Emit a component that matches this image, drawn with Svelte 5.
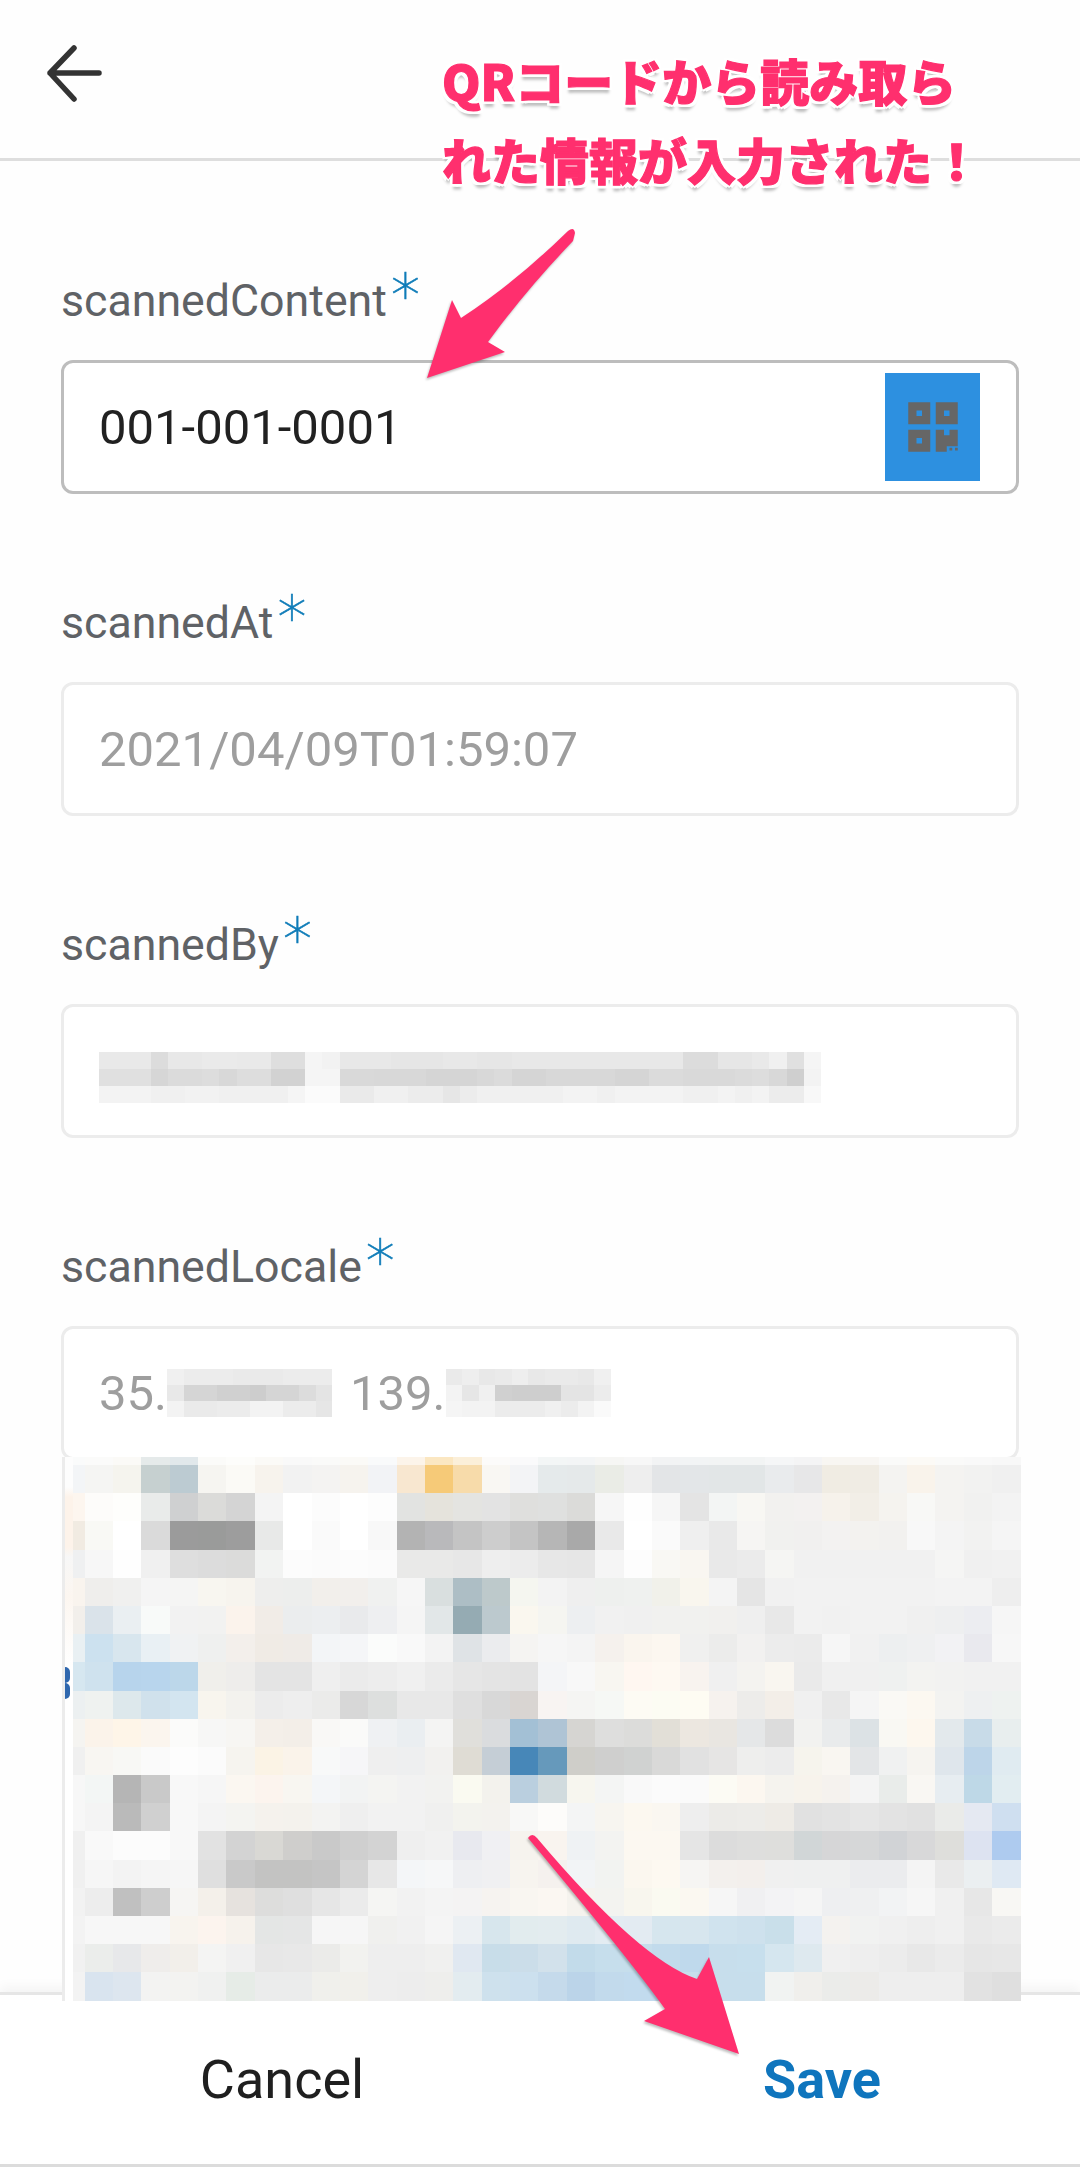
<script>
  // pixelated map screenshot, one string per row of cells
  const mapRows = [
    'f3f5f7 f5f5f3 f5f4ee c6d0d0 bccbd2 f6f5f1 fbfaf6 f7f3ed f2f2f2 f4f3f2 f6f3ee f2f3f6 f8e7d0 f6ca78 f7dbaa f9f7f3 f3f4f6 e5eaeb e5e9ea eaece6 eeeeee e3e5e7 e3e6e8 e2e6e7 e2e6e7 e9ebed e7e7e8 f0ece3 f0ece4 f4f3f1 f9f3eb f4f3f1 f2f2f1 f0f0f0',
    'fdf6ef fdfcfa fefefc e9ebea cfd0d1 dbdbd9 d4d4d4 f4f4f4 ffffff fcfcfc ffffff fdfdfd e2e3e1 e5e3dc e4e4e1 e3e3e3 dfdfdd dfe0df dbdbd9 f6f6f6 fefefe f6f6f6 e4e4e4 f3f5f4 f8f7f3 f2f1ef f3f1f0 f6f2eb f2eee7 f5f3ef f8f8f6 f4f3f1 f1f1f0 f3f3f3',
    'f1ebe2 f9f9f5 ffffff dadada 9b9b9b 9a9b9a 9d9d9d e8e9e8 ffffff fafafa ffffff f8f8f8 b3b3b3 b9b9bb c4c4c4 cdcdcd c4c4c4 b6b6b6 a9a9a9 e9e9e9 ffffff fafafa efefef e9e9e9 f6f5f3 f1f1ef f1f0ef f3f2f1 f3f2ef f2f1ef f8f8f8 f4f4f4 f2f2f1 f5f5f5',
    'eff0f1 f7f7f7 fefefe f0f0f0 dedede dcdcdc dbdbda f2f3f2 fcfcfc fbfbfb fcfcfc fbfbfb e9e9e8 e9e9e8 e7e7e7 eeeeee ececec e7e7e7 e6e6e6 f5f5f5 fdfdfd f9f8f4 f9f6f1 e9e9e9 ebebeb f5f5f3 f1f1f1 f1f1f1 f1f1f1 f1f1f1 f1f1f1 f5f5f4 f0f0f0 f1f1f1',
    'f9f4ee efeeec f0f0ef f5f5f5 f5f5f4 f8f6f0 f7f4ee eeeeed edeeed f2efeb f2efec f0f1f0 f6f6f6 d9dfdf adbec5 bdc9cb f5f6f0 f3f3f3 efefef eef0ee eff1ef f1f1ea f9f6ee f4f4f4 e5e5e5 f1f1f1 f2f2f2 f2f2f2 f2f2f2 f2f2f2 f2f2f2 f3f3f3 f3f3f3 eeeeee',
    'f2efeb dae3ea eaeff2 f8faf9 f2f2f2 f2f2f1 fbf3ec f1ece7 ebedee eceef0 e9eaec eeeff1 f5f5f5 e2e7e8 95abb3 bcc9ce faf7ef f5f5f1 edeff1 f1f1f1 f0f0f0 f1f1ef f1f1ef f1f0ee efefef e8e8e8 f2f2f2 f1f1f1 f2f2f2 f2f2f2 f0f0f0 eeeff0 ecedf1 f6f6f6',
    'e9f0f3 cce1ef d8e6ee e9f0f4 f0f2f3 eff0ef f3efeb f0ebe5 efebe7 f3f5f7 f5f6f8 fbfcfb f9f9f9 f3f3f3 dfe3e6 ebecee f5f4f2 f6f6f6 f4f4f4 f5f1ed faf5ee fcf7f0 f0f0ef ececeb f2f1f0 ececec ebebeb f6f6f6 f1f1f1 edeff0 eff0f1 f2f2f4 e9e9ee f7f7f7',
    'd6e7f0 cfe2ee b7d4ec b8d5ed bcd7ea f0efeb eeedeb e4e4e4 e4e4e4 efefef ebebeb ededed f0f0f0 ebebeb e6e6e6 e4e4e4 e3e3e3 f4f5f7 f8f8f8 f8f6f1 fff7f1 fef9f2 f8f3ef f0f0f0 f4f3f0 f9f6f0 eaeaea f0f0f0 f0f0f0 eff1f0 f3f3f1 f2f2f1 f1f1f1 f1f1f1',
    'ecf0f1 eff2f0 dde8ec d0e1ec d3e5f0 f8f5ee f3f2ee ececec eeeeee ebebea d7d7d7 dddfde e8e8e8 e8e8e8 dfdfdf d8d8d8 d9d5d2 f8f4f2 f5f5f3 f6f8f5 fdfbf4 fcfcf3 fefcf3 f6f2ee edecea f3eee8 f0f0f0 e8e8e8 f5f5f5 faf9f5 fcf8f1 f3f3f1 eef0f1 eef2f0',
    'f5f4f1 fbf3ea fef5e8 fbf5ee fbfbfa f7f7f6 f7f6f3 f4efe9 f3eee8 f9f8f6 fafaf9 eff1f3 eaeef1 f4f4f3 e0dfdb dadcde a3c0d5 afc4d5 d6d5d2 dededd dcdcda e2dfd7 ece7e0 e9e6e1 e5e7e8 dcdcdc f2f2f0 e9ebec dce2e5 f9f8f3 fdf7ee e3e9ec c8dbe8 e8eeee',
    'f0f0f0 f8f6f2 f8f8f5 fafafa fdfdfd fbfbfb f6f4ef fbf3e5 faf3ea f8f9f9 f6f6f8 efefef eeeff0 f2f1ef dfdcd4 c5ced6 4787b8 6699bb cfcec9 cfcfce d0d2d1 d9d9d8 e1e1e1 e6e5e4 eeeeed ececec f6f4ed f9f6f1 e3e5e7 f0f1f1 f6f4f0 dfe6ec bdd5e9 e0ebf1',
    'f7f7f7 f3f6f5 b5b5b5 c9c9c9 f8f8f8 f6f6f6 fbf7f1 fcf4ee f8f6f1 f4f6f8 f2f3f3 f4f4f2 f2f2f2 f2f2f0 fafaf1 f3f2ed bacfdf d1dbde f7f6ef f4f5f4 f9f9f9 fbfbfb fafafa fcfbf4 fcf7f0 f5f3ee f7f3ec f5f2ee f4f4f4 e9ecea f9f7f3 e7edf1 bed8e7 e2edf1',
    'f7f7f7 f4f4f4 bababa d0d0d0 f8f8f8 f4f4f4 f4f4f1 f5f2ed f4f2ed f3f3f2 efefef f2f2f2 f2f2f2 f0f0ef f3f3ee f3f2ee f8f8f7 fdfcfa f4f5f5 f7f5f0 fcf8f0 faf7f1 eeeeee ecebe8 edece9 eeebe6 e1e1e1 e3e3e3 e6e6e6 e3e3e3 e1e1e1 eaebe9 e5e9f2 cfdff0',
    'f0f0f0 f9f9f9 fcfcfc fcfcfc f8f8f8 e2e2e2 d3d3d3 d9d8d4 cfcecc c9c9c9 cfcfcf d3d3d3 efefef f1f1f1 e8e9ef f0f0f3 f6f3ee f9f4ef eff2f4 f3f3f1 fcf8f1 fcf8f1 e5e5e5 dcdcdc dededd dededc d1d6d7 d6d6d7 d6d7d8 d1d3d6 d8d8d9 dededb dde3f1 aecbef',
    'f0f0f0 f6f6f6 f3f3f3 f5f5f5 f6f6f6 dfdfdf c9c9c9 c3c3c2 c3c3c2 c5c5c5 d4d4d4 e7e7e7 f4f6f8 f6f7f8 eeeff2 f0f0f2 f7f4ef f5f1ee f2f4f6 f2f3f1 fbf7ef fdf9f1 f6f5f3 f3f0ed f3efec f0f0f0 eff0f0 eff0f0 ebecee ebecee f4f4f4 e9e9e9 ebeff1 dfe9f3',
    'f2f2f2 ededed c0c0c0 cecece f6f5f3 f4f0ea e6e2de dddddc dfdfdf e6e6e6 ebebeb f5f5f3 f2f2f2 f4f4f4 f4f3f3 f6f3f0 f9f6f1 fbf7f2 f5f3ee f3f3f0 f8f6ee fafaf1 fbf8f1 f6f6f6 f0f0f2 f3f3f5 f5f5f5 eeeff1 eff0f1 f2f3f4 f6f6f6 f0f0f0 e7e7e7 f8f7f4',
    'f3f3f3 f7f7f7 f7f7f7 f7f7f7 f8f4ee fcf4ee f6f2ec e4e6e5 e5e6e6 f6f6f6 f6f6f6 f0f0ee f1f1f1 f5f5f5 ecf0f3 d7e6ed e2ecee e3ecef dfeaf0 e3ecf2 e3ebf2 d6e6ee d7e6ee d0e3ee cee1ed c9dfea e4ecf4 f4f2ef f1f2f1 f0f0f0 eeeeee f0f0f0 e9e9e9 ebebeb',
    'f1f1f1 ebedeb e7e8ea efedeb f2efea f4f4f3 f0f0f0 e7e7e7 e8e8e8 ebebe9 f2f2ef eeeeee eeeeee f0f0ef e0e8f1 c8dde9 cbdde9 d2e1eb c2dbea c6deec c6deec c2dbec bfd9ec c7deec c7dfed d5e6ef dee9ef f0f0f0 eeeeee ececec e8e8e8 ebebeb e6e6e6 e7e7e7',
    'f3f3f3 d9e4ef dde6ef f3f3f2 f3f3f1 f0f1f0 e6ece7 ebecec ebecec f0f0ec f1f0eb eeeeee ededed eeeeec e3ecf0 cee1ed cce0ee c5daeb bbd4e9 c2daec c2dbee c2dbee c7deec c7deec c7deec f1f3f2 f0efec ebecea ecebe9 eeeeee eeeeee eeeeee e2e2e2 dfdfdf',
  ].map((r) => r.split(' '));

  // the thin strip above the first full row of the map
  const mapTop = mapRows[0].map((c) => {
    const n = parseInt(c, 16);
    const mix = (v) => Math.round(v + (255 - v) * 0.55).toString(16).padStart(2, '0');
    return mix(n >> 16) + mix((n >> 8) & 255) + mix(n & 255);
  });

  const grey = (s) => s.split(' ').map((v) => v + v + v);

  const byBlur = [
    'e9 e9 e9 dc e8 e8 ea ea e9 e9 de de f5 f2 e8 e8 e8 e6 e6 e6 e8 e8 e6 e6 e8 e8 e8 e8 e8 e8 e8 e8 e8 e8 dc dc e6 e6 e9 f0 e0 f5',
    'e0 e0 e0 d6 db db dd d8 dd dd d2 d2 f5 f5 d9 d9 d8 d8 d8 d5 d5 d5 d8 db d5 d5 d8 d8 d8 d8 d5 d5 db db d9 d9 d9 db dd d8 cf f3',
    'f3 f3 f3 f0 f0 f2 f2 f0 f0 f0 f0 f5 fb fb ea ea f0 f0 ec ec e6 ec f0 f0 f0 f0 f0 f3 f3 f0 f3 f3 f3 f3 f0 f0 f3 f0 f3 ec ec f8',
  ].map(grey);

  const latBlur = [
    'f0 ec ec ec ea ea ea ec ec ec',
    'e8 d5 d5 d0 d0 cd d5 d5 dc e4',
    'f3 ea ea ec ec f3 f3 ec ec e6',
  ].map(grey);

  const lonBlur = [
    'ea ee e8 ea ee e8 ea ea e8 f0',
    'f3 e6 f0 d0 ce ce ce e4 e4 ec',
    'f5 f3 f3 ec ec ec f0 ec f3 fa',
  ].map(grey);
</script>

{#snippet blur(rows)}
  <span class="blur" style="grid-template-columns: repeat({rows[0].length}, 1fr)">
    {#each rows as row}
      {#each row as c}
        <i style="background:#{c}"></i>
      {/each}
    {/each}
  </span>
{/snippet}

<div class="page">
  <header class="top">
    <svg class="back" viewBox="0 0 60 60" width="60" height="60" fill="none" stroke="#333" stroke-width="5.5" stroke-linecap="round" stroke-linejoin="round">
      <path d="M4 30H53M28 5L4 30l24 26" />
    </svg>
  </header>

  <main class="form">
    <div class="field">
      <div class="label">scannedContent<span class="req">*</span></div>
      <div class="input active">
        <span class="value">001-001-0001</span>
        <span class="qr">
          <svg viewBox="0 0 24 24" width="66" height="66" fill="#666">
            <path fill-rule="evenodd" d="M3 3h8v8H3zM6 6v2h2V6zM13 3h8v8h-8zM16 6v2h2V6zM3 13h8v8H3zM6 16v2h2v-2zM13 13h3v2h2v-2h3v6h-4v2h-4zM18 19.5h1v1h-1zM20 19.5h1v1h-1z" />
          </svg>
        </span>
      </div>
    </div>

    <div class="field">
      <div class="label">scannedAt<span class="req">*</span></div>
      <div class="input"><span class="muted">2021/04/09T01:59:07</span></div>
    </div>

    <div class="field">
      <div class="label">scannedBy<span class="req">*</span></div>
      <div class="input by">{@render blur(byBlur)}</div>
    </div>

    <div class="field">
      <div class="label">scannedLocale<span class="req">*</span></div>
      <div class="input">
        <span class="muted">35.</span>{@render blur(latBlur)}<span class="muted gap">139.</span>{@render blur(lonBlur)}
      </div>
    </div>
  </main>

  <footer class="actions">
    <button class="cancel">Cancel</button>
    <button class="save">Save</button>
  </footer>

  <div class="map">
    <div class="map-edge">
      <span class="blue-a"></span>
      <span class="blue-b"></span>
    </div>
    <div class="map-grid">
      {#each mapTop as c}
        <i style="background:#{c}"></i>
      {/each}
      {#each mapRows as row}
        {#each row as c}
          <i style="background:#{c}"></i>
        {/each}
      {/each}
    </div>
  </div>

  <svg class="arrows" viewBox="0 0 1080 2167" width="1080" height="2167">
    <path d="M568 231Q574 226 575 233L573 241Q526 290 488 342L505 352 427 378 452 300 461 318Q516 282 568 231Z" />
    <path d="M528 1838Q532 1832 537 1838Q640 1960 697 1979L709 1957 739 2054 644 2021 665 2009Q630 1960 528 1838Z" />
  </svg>

  <div class="note">QRコードから読み取ら<br />れた情報が入力された！</div>
</div>

<style>
  :global(body) {
    margin: 0;
    background: #fff;
  }

  .page {
    position: relative;
    display: flex;
    flex-direction: column;
    width: 1080px;
    height: 2167px;
    overflow: hidden;
    background: #fefefe;
    font-family: Roboto, sans-serif;
  }

  .top {
    flex: none;
    display: flex;
    align-items: flex-start;
    height: 161px;
    padding: 43px 0 0 46px;
    box-sizing: border-box;
    border-bottom: 3px solid #dedede;
  }

  .back {
    display: block;
  }

  .form {
    flex: 1;
    display: flex;
    flex-direction: column;
    gap: 99px;
    padding: 110px 61px 0;
  }

  .label {
    height: 60px;
    margin-bottom: 29px;
    font-size: 44.7px;
    line-height: 60px;
    color: #5f6266;
  }

  .req {
    position: relative;
    top: 0;
    margin-left: 4px;
    font-family: "DejaVu Sans", sans-serif;
    font-weight: 200;
    font-size: 58px;
    line-height: 0;
    color: #0f7cb8;
    -webkit-text-stroke: 0.6px #0f7cb8;
  }

  .input {
    display: flex;
    align-items: center;
    height: 134px;
    box-sizing: border-box;
    padding: 0 10px 0 35px;
    border: 3px solid #ececec;
    border-radius: 12px;
    font-size: 49px;
    background: #fff;
  }

  .input.active {
    justify-content: space-between;
    border-color: #bdbdbd;
  }

  .value {
    color: #212121;
  }

  .muted {
    color: #9e9e9e;
  }

  .gap {
    margin-left: 18px;
  }

  .qr {
    display: flex;
    align-items: center;
    justify-content: center;
    width: 95px;
    height: 108px;
    margin-right: 26px;
    background: #2d90e0;
  }

  .blur {
    display: inline-grid;
    grid-auto-rows: 16px;
  }

  .blur i {
    display: block;
    width: 16.5px;
  }

  .by .blur {
    grid-auto-rows: 17px;
    margin-top: 12px;
  }

  .by .blur i {
    width: 17.2px;
  }

  .actions {
    flex: none;
    display: flex;
    height: 175px;
    box-sizing: border-box;
    border-top: 3px solid #e6e6e6;
    border-bottom: 3px solid #dcdcdc;
    background: #fff;
    box-shadow: 0 -6px 10px rgba(0, 0, 0, 0.04);
  }

  .actions button {
    flex: 1;
    padding: 0 0 0 24px;
    border: 0;
    background: none;
    font-family: inherit;
    font-size: 54px;
  }

  .cancel {
    color: #1f1f1f;
  }

  .save {
    color: #0f75bd;
    font-weight: 700;
  }

  .map {
    position: absolute;
    left: 62px;
    top: 1457px;
    display: flex;
  }

  .map-edge {
    position: relative;
    width: 8px;
    border-left: 3px solid #ececec;
    background: linear-gradient(#fdfdfd 30px, #fdf3ea 40px, #fdf3ea 90px, #f7f7f7 100px, #fcf6f0 140px, #fff 210px, #fff 100%);
  }

  .blue-a,
  .blue-b {
    position: absolute;
    left: 0;
    width: 5px;
    height: 16px;
    border-radius: 0 6px 6px 0;
    background: #2f67ae;
  }

  .blue-a {
    top: 210px;
  }

  .blue-b {
    top: 226px;
  }

  .map-grid {
    display: grid;
    grid-template-columns: 11.7px repeat(33, 28.37px);
    grid-template-rows: 8px repeat(19, 28.2px);
  }

  .map-grid i {
    display: block;
  }

  .arrows {
    position: absolute;
    left: 0;
    top: 0;
    fill: #ff2f6e;
    filter: drop-shadow(-1px 2px 1px rgba(0, 0, 0, 0.25));
    pointer-events: none;
  }

  .note {
    position: absolute;
    left: 442px;
    top: 40px;
    font-family: "Noto Sans CJK JP", sans-serif;
    font-weight: 900;
    font-size: 49px;
    line-height: 79px;
    white-space: nowrap;
    color: #ff2f6e;
    -webkit-text-stroke: 1.2px #ff2f6e;
    text-shadow:
      3px 0 0 #fff, -3px 0 0 #fff, 0 3px 0 #fff, 0 -3px 0 #fff,
      3px 3px 0 #fff, -3px 3px 0 #fff, 3px -3px 0 #fff, -3px -3px 0 #fff,
      0 6px 3px rgba(0, 0, 0, 0.25);
  }
</style>
